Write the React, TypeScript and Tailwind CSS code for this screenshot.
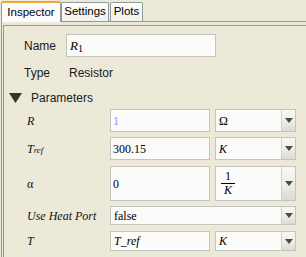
import React from 'react'

const serif = "font-['Liberation_Serif','Times_New_Roman',serif]"
const sans = "font-['Liberation_Sans',Arial,sans-serif]"

function Arrow() {
  return (
    <svg width="8" height="5" viewBox="0 0 8 5">
      <path d="M0 0 H8 L4 5 Z" fill="#4a4a4a" />
    </svg>
  )
}

function Box({ className = '', children }: { className?: string; children?: React.ReactNode }) {
  return (
    <div className={`flex items-center border border-[#c3c3bf] bg-[#fbfbf9] pl-[2px] ${serif} text-[12px] text-black ${className}`}>
      {children}
    </div>
  )
}

function Combo({ className = '', children }: { className?: string; children?: React.ReactNode }) {
  return (
    <div className={`flex border border-[#c3c3bf] bg-[#fbfbf9] ${serif} text-[12px] text-black ${className}`}>
      <div className="flex flex-1 items-center pl-[3px]">{children}</div>
      <div className="flex w-[14px] items-center justify-center border-l border-[#d0d0cc] bg-gradient-to-b from-[#f7f7f4] via-[#efefea] to-[#dcdad0]">
        <Arrow />
      </div>
    </div>
  )
}

function ParamRow({ label, h, mt, children }: { label: React.ReactNode; h: string; mt: string; children: React.ReactNode }) {
  return (
    <div className={`flex ${h} ${mt}`}>
      <div className={`flex w-[106px] items-center pl-[23px] ${serif} text-[12px] italic text-[#111]`}>{label}</div>
      {children}
    </div>
  )
}

export default function App() {
  return (
    <div className={`h-[257px] w-[306px] overflow-hidden bg-[#ece9d8] ${sans}`}>
      {/* tabs */}
      <div className="flex h-[21px] items-end pl-[1px] text-[11.5px] text-black">
        <div className="relative z-10 -mb-[1px] flex h-[21px] w-[60px] items-center justify-center rounded-t-[2px] border-x border-t-2 border-x-[#919b9c] border-t-[#f2a73a] bg-[#fcfcfe]">
          Inspector
        </div>
        <div className="flex h-[19px] w-[48px] items-center justify-center rounded-t-[2px] border-x border-t border-[#919b9c] bg-gradient-to-b from-[#fefefe] to-[#f1f0ea]">
          Settings
        </div>
        <div className="ml-[1px] flex h-[19px] w-[33px] items-center justify-center rounded-t-[2px] border-x border-t border-[#919b9c] bg-gradient-to-b from-[#fefefe] to-[#f1f0ea]">
          Plots
        </div>
      </div>

      {/* tab body */}
      <div className="ml-[1px] h-[240px] w-[320px] border-l border-t border-[#919b9c] pl-[1px] pt-[3px]">
        <div className="h-full border-l border-t border-[#7f9db9] text-[12px] text-[#1a1a1a]">
          <div className="mt-[8px] flex h-[23px]">
            <div className="flex w-[62px] items-center pl-[20px]">Name</div>
            <Box className="w-[150px] pl-[3px]">
              <span className="text-[13px] italic">R</span>
              <span className="mt-[6px] text-[10px]">1</span>
            </Box>
          </div>

          <div className="mt-[6px] flex h-[20px] items-center">
            <div className="w-[65px] pl-[20px]">Type</div>
            <div>Resistor</div>
          </div>

          <div className="mt-[5px] flex h-[20px] items-center">
            <svg className="ml-[5px]" width="13" height="10" viewBox="0 0 13 10">
              <path d="M0 0 H13 L6.5 10 Z" fill="#333" />
            </svg>
            <div className="ml-[9px] text-[12px]">Parameters</div>
          </div>

          <ParamRow label="R" h="h-[23px]" mt="mt-[1px]">
            <Box className="w-[100px]">
              <span className="text-[#8f95ee]">1</span>
            </Box>
            <Combo className="ml-[5px] w-[81px]">Ω</Combo>
          </ParamRow>

          <ParamRow
            label={
              <>
                T<span className="mt-[5px] text-[9px]">ref</span>
              </>
            }
            h="h-[23px]"
            mt="mt-[5px]"
          >
            <Box className="w-[100px]">300.15</Box>
            <Combo className="ml-[5px] w-[81px]">
              <span className="italic">K</span>
            </Combo>
          </ParamRow>

          <ParamRow label={<span className="not-italic">α</span>} h="h-[35px]" mt="mt-[6px]">
            <Box className="w-[100px]">0</Box>
            <Combo className="ml-[5px] w-[81px]">
              <div className="ml-[2px] flex w-[14px] flex-col items-center leading-[11px]">
                <span>1</span>
                <span className="my-[1px] h-[1px] w-[14px] bg-black" />
                <span className="italic">K</span>
              </div>
            </Combo>
          </ParamRow>

          <ParamRow label="Use Heat Port" h="h-[19px]" mt="mt-[5px]">
            <Combo className="w-[186px]">false</Combo>
          </ParamRow>

          <ParamRow label="T" h="h-[20px]" mt="mt-[6px]">
            <Box className="w-[100px] pl-[3px] italic">T_ref</Box>
            <Combo className="ml-[5px] w-[81px]">
              <span className="italic">K</span>
            </Combo>
          </ParamRow>
        </div>
      </div>
    </div>
  )
}
